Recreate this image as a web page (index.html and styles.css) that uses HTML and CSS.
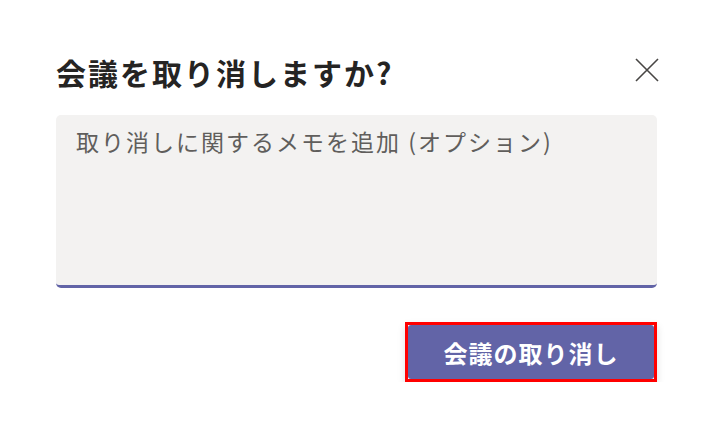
FILE: index.html
```html
<!DOCTYPE html>
<html lang="ja">
<head>
  <meta charset="UTF-8" />
  <meta name="viewport" content="width=device-width, initial-scale=1.0"/>
  <title>会議を取り消しますか?</title>
  <link rel="stylesheet" href="styles.css">
</head>
<body>
  <div class="dialog">
    <div class="dialog-header">
      <h2>会議を取り消しますか?</h2>
      <button class="close-btn" aria-label="閉じる">
        <svg width="24" height="24" viewBox="0 0 24 24">
          <path d="M1 1 L23 23 M23 1 L1 23" stroke="#484644" stroke-width="1.6" fill="none"/>
        </svg>
      </button>
    </div>

    <textarea class="memo" placeholder="取り消しに関するメモを追加 (オプション)"></textarea>

    <div class="actions">
      <span class="highlight">
        <button class="btn">会議の取り消し</button>
      </span>
    </div>
  </div>
</body>
</html>
```

FILE: styles.css
```css
body {
  margin: 0;
  background-color: #ffffff;
  font-family: "Noto Sans CJK JP", "Noto Sans", sans-serif;
}

.dialog {
  padding: 50px 57px 0 56px;
}

.dialog-header {
  display: flex;
  justify-content: space-between;
  align-items: center;
  height: 44px;
}

.dialog-header h2 {
  margin: 0;
  font-size: 30px;
  font-weight: bold;
  letter-spacing: 2px;
  color: #252423;
  line-height: 44px;
}

.close-btn {
  background: none;
  border: none;
  padding: 0;
  margin-right: -2px;
  margin-bottom: 5px;
  width: 24px;
  height: 24px;
  cursor: pointer;
}

.close-btn svg {
  display: block;
}

.memo {
  display: block;
  box-sizing: border-box;
  width: 100%;
  height: 173px;
  margin-top: 21px;
  padding: 9px 20px;
  background-color: #f3f2f1;
  border: none;
  border-bottom: 3px solid #6264a7;
  border-radius: 5px;
  resize: none;
  outline: none;
  font-family: inherit;
  font-size: 23px;
  letter-spacing: 2px;
  color: #252423;
}

.memo::placeholder {
  color: #605e5c;
}

.actions {
  display: flex;
  justify-content: flex-end;
  margin-top: 34px;
}

.highlight {
  display: flex;
  border: 3px solid #ff0000;
  box-shadow: 0 4px 8px rgba(0, 0, 0, 0.12);
}

.btn {
  width: 246px;
  height: 54px;
  background-color: #6264a7;
  color: #ffffff;
  border: none;
  border-radius: 3px;
  font-family: inherit;
  font-size: 24px;
  font-weight: bold;
  letter-spacing: 1px;
  cursor: pointer;
}
```
